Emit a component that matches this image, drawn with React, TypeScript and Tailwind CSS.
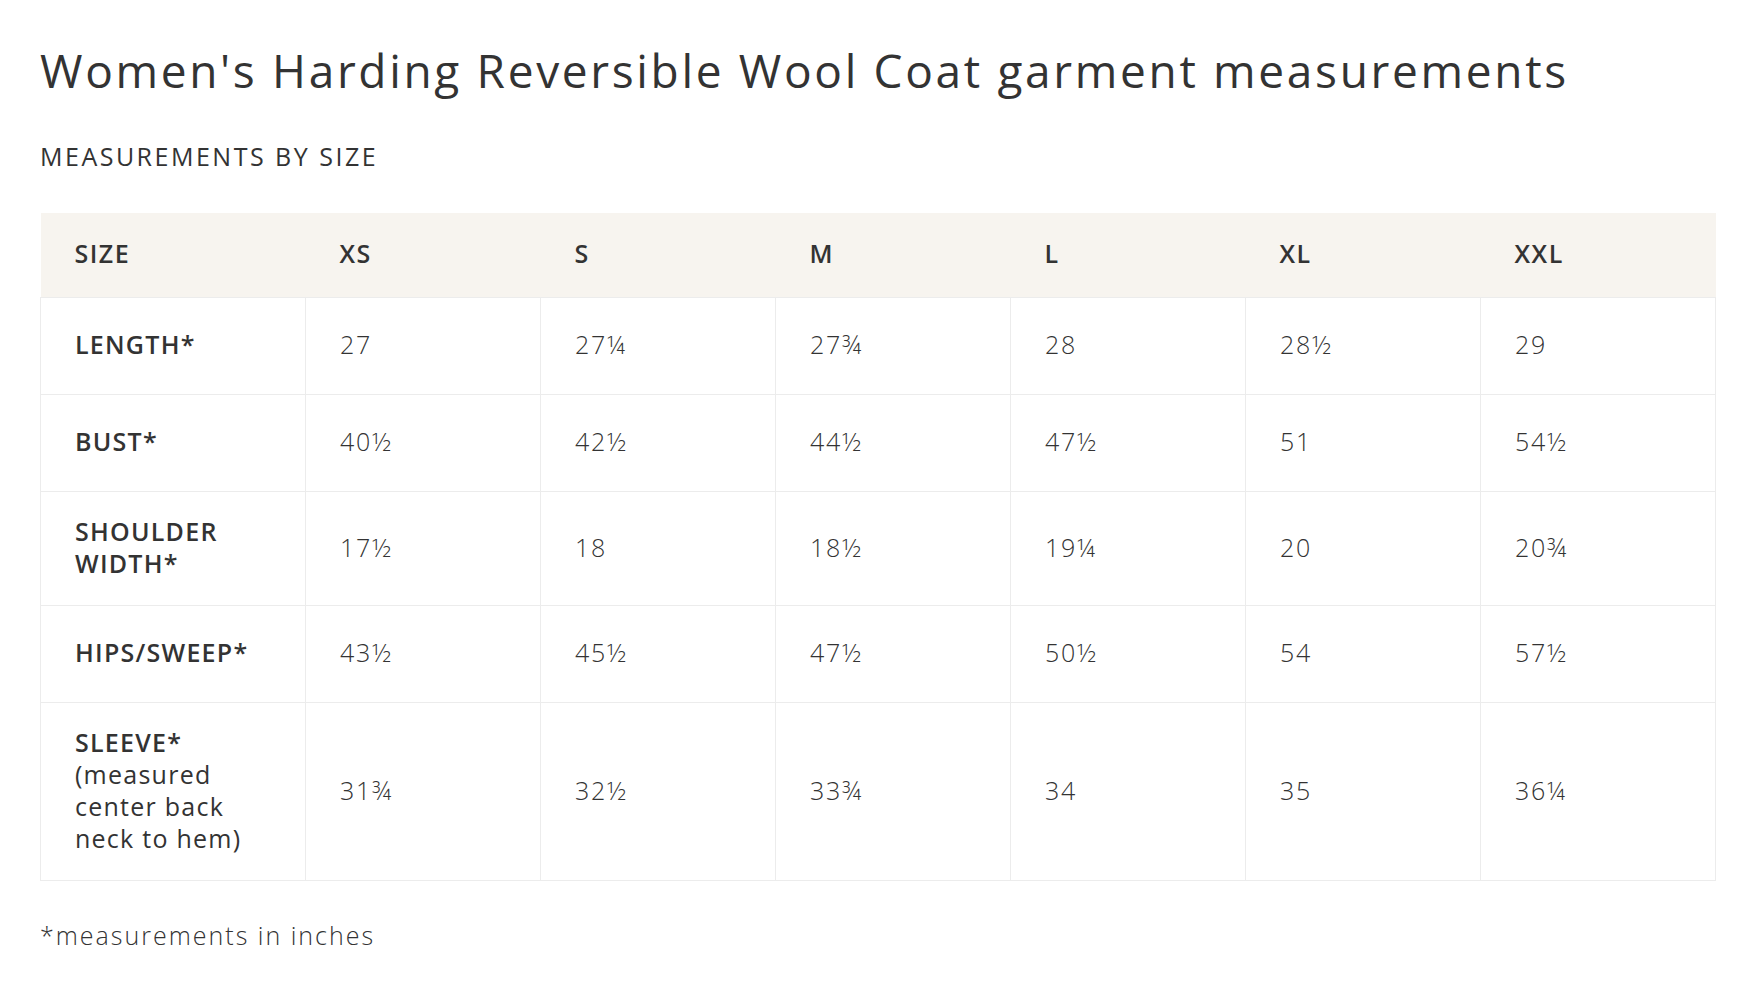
import React from 'react'

interface Row {
  label: string
  note?: string
  values: string[]
}

const sizes = ['XS', 'S', 'M', 'L', 'XL', 'XXL']

const rows: Row[] = [
  { label: 'LENGTH*', values: ['27', '27¼', '27¾', '28', '28½', '29'] },
  { label: 'BUST*', values: ['40½', '42½', '44½', '47½', '51', '54½'] },
  { label: 'SHOULDER WIDTH*', values: ['17½', '18', '18½', '19¼', '20', '20¾'] },
  { label: 'HIPS/SWEEP*', values: ['43½', '45½', '47½', '50½', '54', '57½'] },
  {
    label: 'SLEEVE*',
    note: '(measured center back neck to hem)',
    values: ['31¾', '32½', '33¾', '34', '35', '36¼'],
  },
]

export default function App() {
  return (
    <div
      className="min-h-screen bg-white px-[40px] pt-[42px] text-[#333333]"
      style={{ fontFamily: '"Open Sans", "Noto Sans", sans-serif' }}
    >
      <h1 className="text-[46px] leading-[56px] font-medium tracking-[0.058em]">
        Women's Harding Reversible Wool Coat garment measurements
      </h1>

      <h2 className="mt-[42px] text-[25px] leading-[32px] font-medium tracking-[0.1em]">
        MEASUREMENTS BY SIZE
      </h2>

      <table className="mt-[41px] w-[1675px] table-fixed border-collapse text-[25px] leading-[32px]">
        <colgroup>
          <col className="w-[265px]" />
          {sizes.map(s => (
            <col key={s} className="w-[235px]" />
          ))}
        </colgroup>
        <thead>
          <tr className="h-[84px] bg-[#f7f4ef]">
            <th className="px-[34px] pb-[4px] text-left align-middle font-semibold tracking-[0.06em]">SIZE</th>
            {sizes.map(s => (
              <th key={s} className="px-[34px] pb-[4px] text-left align-middle font-semibold tracking-[0.06em]">
                {s}
              </th>
            ))}
          </tr>
        </thead>
        <tbody>
          {rows.map(row => (
            <tr key={row.label} className="h-[97px]">
              <td className="border border-[#ececec] pt-[23px] pb-[26px] pl-[34px] pr-[30px] align-middle">
                <span className="font-semibold tracking-[0.05em]">{row.label}</span>
                {row.note && (
                  <span className="block font-normal tracking-[0.05em]">{row.note}</span>
                )}
              </td>
              {row.values.map((v, i) => (
                <td
                  key={i}
                  className="border border-[#ececec] px-[34px] pt-[23px] pb-[26px] align-middle font-light tracking-[0.07em]"
                >
                  {v}
                </td>
              ))}
            </tr>
          ))}
        </tbody>
      </table>

      <p className="mt-[38px] text-[25px] leading-[32px] font-light tracking-[0.08em]">
        *measurements in inches
      </p>
    </div>
  )
}
